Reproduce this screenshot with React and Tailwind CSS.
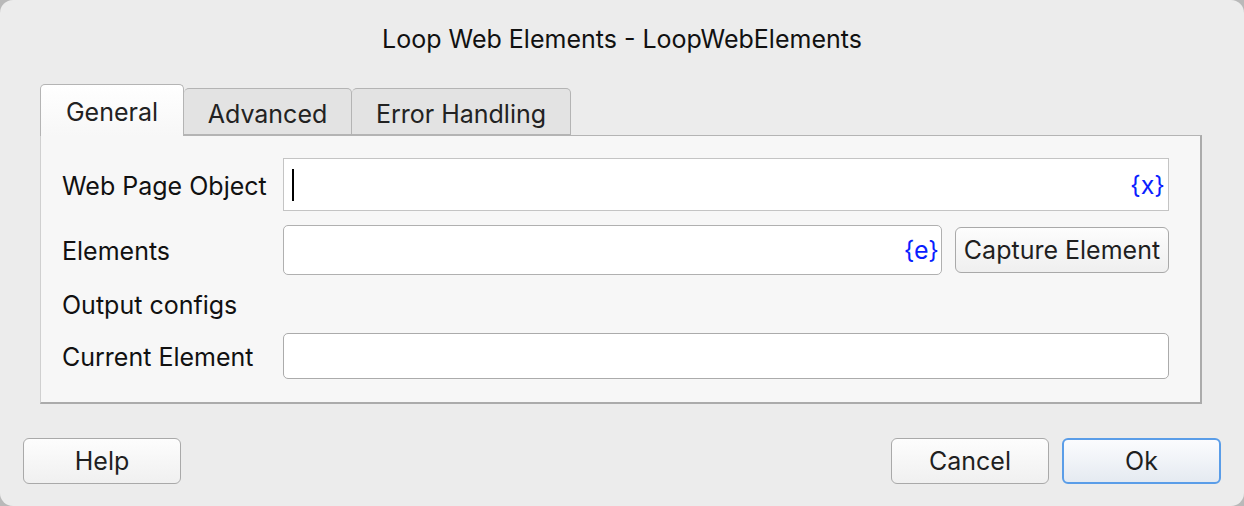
import React from "react";

const font = { fontFamily: "Inter, 'Liberation Sans', sans-serif" };

function Btn({ children, primary, className = "" }) {
  return (
    <div
      className={
        "flex items-center justify-center h-[46px] w-[158px] rounded-[6px] text-[25px] text-[#1f1f1f] pt-[1px] " +
        (primary
          ? "border-2 border-[#5a9de8] bg-gradient-to-b from-[#fbfcfe] to-[#e5eaf1]"
          : "border-[1.5px] border-[#a9a9a9] bg-gradient-to-b from-[#fdfdfd] to-[#f0f0f0]") +
        " " +
        className
      }
    >
      {children}
    </div>
  );
}

export default function App() {
  return (
    <div className="w-[1244px] h-[506px] bg-[#b9b9b9]" style={font}>
      <div className="w-full h-full rounded-[13px] bg-[#ececec] flex flex-col">
        <div className="h-[84px] flex items-center justify-center pb-[4px] text-[25px] text-[#111]">
          Loop Web Elements - LoopWebElements
        </div>
        <div className="flex items-end pl-[40px] h-[51px]">
          <div className="relative z-10 h-[52px] w-[144px] -mb-px rounded-t-[5px] border-[1.5px] border-b-0 border-[#b4b4b4] bg-gradient-to-b from-[#ffffff] to-[#f7f7f7] flex items-center justify-center pt-[4px] text-[25px] text-[#222]">
            General
          </div>
          <div className="h-[47px] w-[168px] rounded-t-[5px] border-[1.5px] border-l-0 border-[#b4b4b4] bg-[#e3e3e3] flex items-center justify-center pt-[6px] text-[25px] text-[#222]">
            Advanced
          </div>
          <div className="h-[47px] w-[219px] rounded-t-[5px] border-[1.5px] border-l-0 border-[#b4b4b4] bg-[#e3e3e3] flex items-center justify-center pt-[6px] text-[25px] text-[#222]">
            Error Handling
          </div>
        </div>
        <div className="ml-[40px] mr-[42px] h-[269px] border-t-[1.5px] border-l-[1.5px] border-l-[#d0d0d0] border-t-[#b4b4b4] border-r-[2.5px] border-b-[2.5px] border-r-[#ababab] border-b-[#ababab] bg-[#f7f7f7] pl-[21px] pr-[31px] pt-[22px] flex flex-col text-[25px] text-[#111]">
          <div className="flex items-center h-[53px]">
            <div className="w-[221px] shrink-0 pt-[4px]">Web Page Object</div>
            <div className="flex-1 h-full bg-white border border-[#c4c4c4] flex items-center pl-[8px] pr-[3px]">
              <div className="w-[2px] h-[32px] bg-black" />
              <div className="flex-1" />
              <span className="text-[#0a1eff] pt-[2px]">{"{x}"}</span>
            </div>
          </div>
          <div className="flex items-center h-[50px] mt-[14px]">
            <div className="w-[221px] shrink-0 pt-[4px]">Elements</div>
            <div className="flex-1 h-full bg-white border-[1.5px] border-[#b0b0b0] rounded-[5px] flex items-center justify-end pr-[2px]">
              <span className="text-[#0a1eff] pt-[1px]">{"{e}"}</span>
            </div>
            <div className="ml-[13px] h-[46px] w-[214px] rounded-[6px] border-[1.5px] border-[#a9a9a9] bg-gradient-to-b from-[#fdfdfd] to-[#efefef] flex items-center justify-center pt-[2px] text-[#1f1f1f]">
              Capture Element
            </div>
          </div>
          <div className="h-[26px] mt-[16px] flex items-center pt-[3px]">Output configs</div>
          <div className="flex items-center h-[46px] mt-[16px]">
            <div className="w-[221px] shrink-0 pt-[3px]">Current Element</div>
            <div className="flex-1 h-full bg-white border-[1.5px] border-[#ababab] rounded-[5px]" />
          </div>
        </div>
        <div className="flex items-center justify-between px-[23px] mt-[34px]">
          <Btn>Help</Btn>
          <div className="flex gap-[13px]">
            <Btn>Cancel</Btn>
            <Btn primary className="w-[159px]">Ok</Btn>
          </div>
        </div>
      </div>
    </div>
  );
}
